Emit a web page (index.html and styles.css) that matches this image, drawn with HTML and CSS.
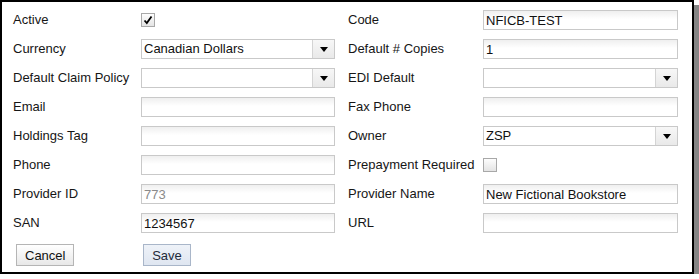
FILE: index.html
```html
<!DOCTYPE html>
<html lang="en">
<head>
    <meta charset="UTF-8">
    <meta name="viewport" content="width=device-width, initial-scale=1.0">
    <title>Provider Details</title>
    <link rel="stylesheet" href="styles.css">
</head>
<body>

    <div class="panel">
        <div class="form-grid">
            <label class="field-label">Active</label>
            <div class="field"><span class="checkbox checked"><svg width="12" height="12" viewBox="0 0 12 12"><path d="M2.5 6.5 L4.8 9 L9.5 2.5" fill="none" stroke="#000" stroke-width="1.8"/></svg></span></div>
            <label class="field-label">Code</label>
            <div class="field"><input class="text-input" type="text" value="NFICB-TEST"></div>

            <label class="field-label">Currency</label>
            <div class="field">
                <div class="select">
                    <span class="select-value">Canadian Dollars</span>
                    <span class="select-btn"><svg width="8" height="5" viewBox="0 0 8 5"><path d="M0 0 H8 L4 5 Z" fill="#000"/></svg></span>
                </div>
            </div>
            <label class="field-label">Default # Copies</label>
            <div class="field"><input class="text-input" type="text" value="1"></div>

            <label class="field-label">Default Claim Policy</label>
            <div class="field">
                <div class="select">
                    <span class="select-value"></span>
                    <span class="select-btn"><svg width="8" height="5" viewBox="0 0 8 5"><path d="M0 0 H8 L4 5 Z" fill="#000"/></svg></span>
                </div>
            </div>
            <label class="field-label">EDI Default</label>
            <div class="field">
                <div class="select">
                    <span class="select-value"></span>
                    <span class="select-btn"><svg width="8" height="5" viewBox="0 0 8 5"><path d="M0 0 H8 L4 5 Z" fill="#000"/></svg></span>
                </div>
            </div>

            <label class="field-label">Email</label>
            <div class="field"><input class="text-input" type="text" value=""></div>
            <label class="field-label">Fax Phone</label>
            <div class="field"><input class="text-input" type="text" value=""></div>

            <label class="field-label">Holdings Tag</label>
            <div class="field"><input class="text-input" type="text" value=""></div>
            <label class="field-label">Owner</label>
            <div class="field">
                <div class="select">
                    <span class="select-value">ZSP</span>
                    <span class="select-btn"><svg width="8" height="5" viewBox="0 0 8 5"><path d="M0 0 H8 L4 5 Z" fill="#000"/></svg></span>
                </div>
            </div>

            <label class="field-label">Phone</label>
            <div class="field"><input class="text-input" type="text" value=""></div>
            <label class="field-label">Prepayment Required</label>
            <div class="field"><span class="checkbox"></span></div>

            <label class="field-label">Provider ID</label>
            <div class="field"><input class="text-input readonly" type="text" value="773" readonly></div>
            <label class="field-label">Provider Name</label>
            <div class="field"><input class="text-input" type="text" value="New Fictional Bookstore"></div>

            <label class="field-label">SAN</label>
            <div class="field"><input class="text-input" type="text" value="1234567"></div>
            <label class="field-label">URL</label>
            <div class="field"><input class="text-input" type="text" value=""></div>
        </div>

        <div class="actions">
            <button class="btn btn-cancel">Cancel</button>
            <button class="btn btn-save">Save</button>
        </div>
    </div>

</body>
</html>
```

FILE: styles.css
```css
/* General Styling */
body {
    margin: 0;
    padding: 0;
    background: #fff;
    font-family: "Liberation Sans", Arial, sans-serif;
    font-size: 13px;
    color: #161616;
}

.panel {
    box-sizing: border-box;
    width: 694px;
    height: 274px;
    border: 2px solid #000;
    box-shadow: 5px 5px 0 #858585;
    padding: 8px 14px 0 11px;
}

/* Form grid */
.form-grid {
    display: grid;
    grid-template-columns: 128px 207px 135px 195px;
    grid-auto-rows: 20px;
    row-gap: 9px;
    align-items: center;
}

.field-label {
    white-space: nowrap;
    margin-top: -1px;
}

.field {
    display: flex;
    align-items: center;
    height: 20px;
}

.text-input {
    box-sizing: border-box;
    width: 194px;
    height: 20px;
    margin: 0;
    padding: 0 2px;
    border: 1px solid #c9c9c9;
    background: linear-gradient(#efefef, #fff 45%);
    font-family: "Liberation Sans", Arial, sans-serif;
    font-size: 13px;
    color: #111;
    outline: none;
}

.form-grid .field:nth-child(4n) .text-input,
.form-grid .field:nth-child(4n) .select {
    width: 195px;
}

.text-input.readonly {
    color: #8a8a8a;
}

/* Dropdowns */
.select {
    box-sizing: border-box;
    display: flex;
    width: 194px;
    height: 20px;
    border: 1px solid #c9c9c9;
    background: #fff;
}

.select-value {
    flex: 1;
    padding: 0 2px;
    line-height: 18px;
    color: #111;
}

.select-btn {
    width: 21px;
    display: flex;
    align-items: center;
    justify-content: center;
    border-left: 1px solid #d4d4d4;
    background: linear-gradient(#f7f7f7, #e9e9e9);
}

/* Checkboxes */
.checkbox {
    box-sizing: border-box;
    display: flex;
    align-items: center;
    justify-content: center;
    width: 14px;
    height: 14px;
    border: 1px solid #a8a8a8;
    background: linear-gradient(#fdfdfd, #e4e4e4);
}

/* Buttons */
.actions {
    display: flex;
    margin-top: 11px;
}

.btn {
    box-sizing: border-box;
    height: 22px;
    padding: 0 8px;
    font-family: "Liberation Sans", Arial, sans-serif;
    font-size: 13px;
    color: #111;
    border-radius: 0;
    cursor: pointer;
}

.btn-cancel {
    width: 58px;
    margin-left: 3px;
    border: 1px solid #b5b5b5;
    background: linear-gradient(#ffffff, #e8e8e8);
}

.btn-save {
    width: 48px;
    margin-left: 69px;
    border: 1px solid #a9b6c9;
    background: linear-gradient(#eef2f8, #dfe6f1);
    color: #1f2a3a;
}
```
